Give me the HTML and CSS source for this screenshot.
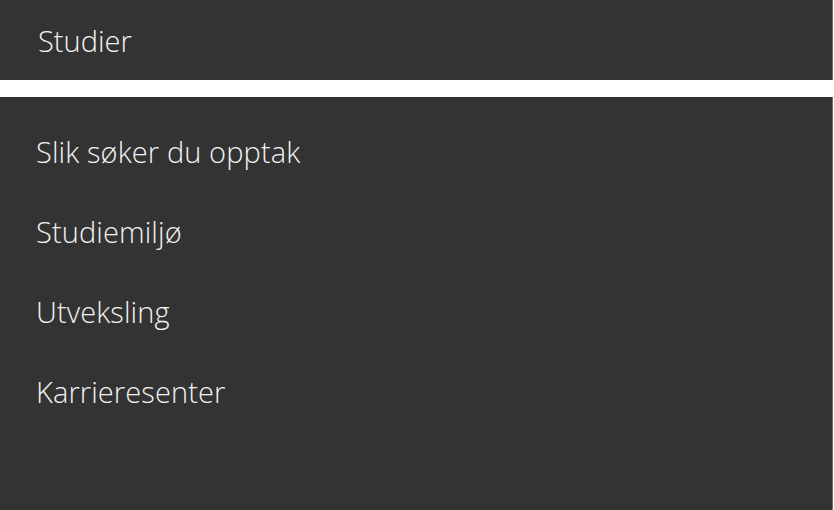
FILE: index.html
```html
<!DOCTYPE html>
<html lang="no">
<head>
<meta charset="utf-8">
<title>Studier</title>
<link rel="stylesheet" href="styles.css">
</head>
<body>
<header class="bar">
  <h1 class="bar-title">Studier</h1>
</header>
<nav class="panel">
  <ul class="menu">
    <li class="menu-item"><a class="menu-link" href="#">Slik søker du opptak</a></li>
    <li class="menu-item"><a class="menu-link" href="#">Studiemiljø</a></li>
    <li class="menu-item"><a class="menu-link" href="#">Utveksling</a></li>
    <li class="menu-item"><a class="menu-link" href="#">Karrieresenter</a></li>
  </ul>
</nav>
</body>
</html>
```
FILE: styles.css
```css
html, body {
  margin: 0;
  padding: 0;
  background: #ffffff;
  overflow: hidden;
}
body {
  font-family: "Open Sans", "Liberation Sans", sans-serif;
  font-weight: 300;
  color: #f2f2f2;
  width: 833px;
}
.bar {
  background: #333333;
  height: 80px;
  box-sizing: border-box;
  padding: 21px 0 0 38px;
  border-right: 1px solid #707070;
}
.bar-title {
  margin: 0;
  font-size: 29px;
  font-weight: 300;
  line-height: 40px;
}
.panel {
  margin-top: 17px;
  background: #333333;
  border-right: 1px solid #707070;
  min-height: 420px;
  padding: 15px 0 0 36px;
  box-sizing: border-box;
}
.menu {
  list-style: none;
  margin: 0;
  padding: 0;
}
.menu-item {
  padding: 20px 0;
}
.menu-link {
  display: block;
  color: #f2f2f2;
  text-decoration: none;
  font-size: 29px;
  line-height: 40px;
  letter-spacing: 0.1px;
}
```
